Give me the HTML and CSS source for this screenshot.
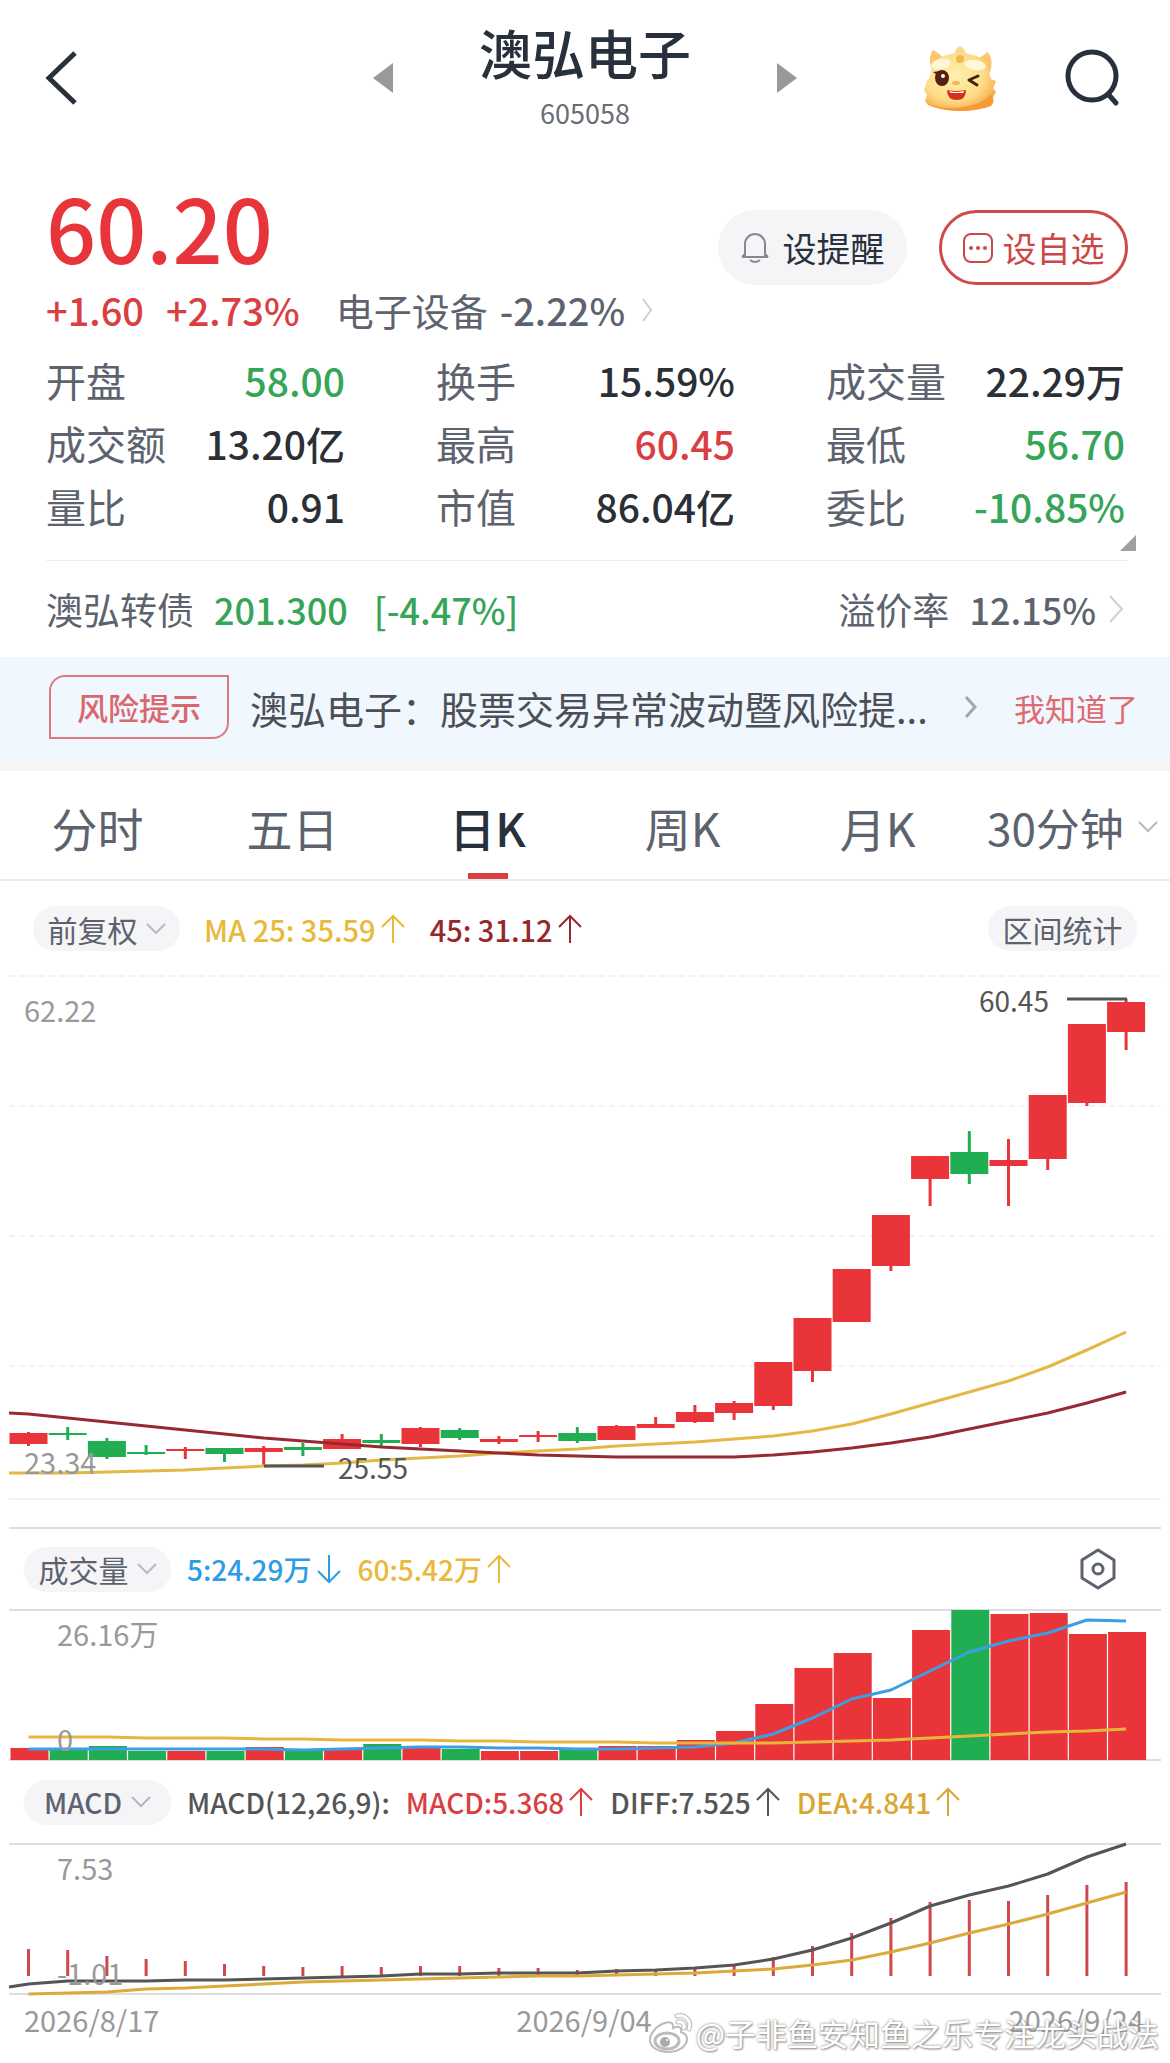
FILE: index.html
```html
<!DOCTYPE html>
<html lang="zh-CN">
<head>
    <meta charset="UTF-8">
    <meta name="viewport" content="width=device-width, initial-scale=1.0">
    <title>澳弘电子 605058</title>
    <link rel="stylesheet" href="styles.css">
</head>
<body>
    <header class="header">
        <button class="icon-btn back" aria-label="返回">
            <svg width="36" height="60" viewBox="0 0 36 60"><path d="M31 5L5 30l26 25" fill="none" stroke="#27303b" stroke-width="5"/></svg>
        </button>
        <div class="stock">
            <button class="icon-btn" aria-label="上一只">
                <svg width="20" height="30" viewBox="0 0 20 30"><path d="M20 0v30L0 15z" fill="#999"/></svg>
            </button>
            <div class="stock-name">
                <h1>澳弘电子</h1>
                <p>605058</p>
            </div>
            <button class="icon-btn" aria-label="下一只">
                <svg width="20" height="30" viewBox="0 0 20 30"><path d="M0 0v30l20-15z" fill="#999"/></svg>
            </button>
        </div>
        <div class="header-tools">
            <button class="icon-btn" aria-label="助手">
                <svg width="74" height="68" viewBox="0 0 74 68">
                    <defs>
                        <radialGradient id="face" cx="0.42" cy="0.4" r="0.65">
                            <stop offset="0" stop-color="#fff0b0"/>
                            <stop offset="0.65" stop-color="#fedc88"/>
                            <stop offset="1" stop-color="#f7a544"/>
                        </radialGradient>
                    </defs>
                    <path d="M8 24Q5 12 10 6Q18 10 21 16zM54 15Q60 12 65 8Q71 16 67 29z" fill="#fcc66f"/>
                    <path d="M31 12Q32 4 37 2Q43 5 43 12z" fill="#fbd88a"/>
                    <path d="M10 19Q20 9 37 9Q54 9 64 19Q66 28 68 35L73 37L70 44L73 48L70 53Q72 58 68 62Q55 67 36 67Q16 66 5 61L2 57L4 51L1 46L4 37Q7 34 8 27z" fill="url(#face)"/>
                    <path d="M4 60Q22 66 40 63Q58 61 69 50Q71 57 67 62Q54 67 35 67Q15 66 4 60z" fill="#f79a35"/>
                    <ellipse cx="37" cy="15" rx="4" ry="4" fill="#f3b94e"/>
                    <ellipse cx="18" cy="20" rx="10" ry="5" transform="rotate(-12 18 20)" fill="#fff8d8"/>
                    <ellipse cx="52" cy="21" rx="11" ry="5" transform="rotate(8 52 21)" fill="#fff8d8"/>
                    <ellipse cx="19" cy="34" rx="7" ry="8" fill="#57210f"/>
                    <path d="M10 28l7-1-3 4z" fill="#57210f"/>
                    <circle cx="20" cy="32" r="2" fill="#fff"/>
                    <path d="M55 32l-9 4 8 5" fill="none" stroke="#3e260c" stroke-width="3" stroke-linecap="round" stroke-linejoin="round"/>
                    <ellipse cx="33" cy="39" rx="4" ry="2" fill="#f5b45b"/>
                    <path d="M24 46Q33 48 43 46Q43 56 34 56Q24 56 24 46z" fill="#d52f20"/>
                    <path d="M26 47Q33 49 41 47L40 49H28z" fill="#fff"/>
                </svg>
            </button>
            <button class="icon-btn" aria-label="搜索">
                <svg width="56" height="60" viewBox="0 0 56 60" fill="none" stroke="#27303b" stroke-width="5" stroke-linecap="round"><circle cx="28" cy="28" r="24"/><path d="M44 46l8 9"/></svg>
            </button>
        </div>
    </header>

    <section class="quote">
        <div>
            <p class="price">60.20</p>
            <p class="change">
                <span class="up">+1.60</span>
                <span class="up">+2.73%</span>
                <a href="#" class="sector">电子设备 <b>-2.22%</b>
                    <svg width="12" height="26" viewBox="0 0 12 26"><path d="M2 2l8 11-8 11" fill="none" stroke="#ccd1d8" stroke-width="2"/></svg>
                </a>
            </p>
        </div>
        <div class="quote-btns">
            <button class="round-btn">
                <svg width="28" height="32" viewBox="0 0 28 32" fill="none" stroke="#85898f" stroke-width="2"><path d="M4 25V12a10 10 0 0 1 20 0v13M1 25h26M1 25l3-3M27 25l-3-3"/><path d="M9 28q5 4 10 0"/></svg>
                设提醒
            </button>
            <button class="round-btn round-btn-red">
                <svg width="30" height="30" viewBox="0 0 30 30"><rect x="1" y="1" width="28" height="28" rx="7" fill="none" stroke="#cc4747" stroke-width="2"/><g fill="#cc4747"><circle cx="8" cy="15" r="2"/><circle cx="15" cy="15" r="2"/><circle cx="22" cy="15" r="2"/></g></svg>
                设自选
            </button>
        </div>
    </section>

    <dl class="stats">
        <div><dt>开盘</dt><dd class="down">58.00</dd></div>
        <div><dt>换手</dt><dd>15.59%</dd></div>
        <div><dt>成交量</dt><dd>22.29万</dd></div>
        <div><dt>成交额</dt><dd>13.20亿</dd></div>
        <div><dt>最高</dt><dd class="up">60.45</dd></div>
        <div><dt>最低</dt><dd class="down">56.70</dd></div>
        <div><dt>量比</dt><dd>0.91</dd></div>
        <div><dt>市值</dt><dd>86.04亿</dd></div>
        <div><dt>委比</dt><dd class="down">-10.85%</dd></div>
    </dl>
    <div class="stats-more">
        <svg width="16" height="16" viewBox="0 0 16 16"><path d="M16 0v16H0z" fill="#9c9fa3"/></svg>
    </div>

    <a href="#" class="bond">
        <span>澳弘转债</span>
        <span class="down">201.300</span>
        <span class="down bond-pct">[-4.47%]</span>
        <span class="bond-rate">溢价率</span>
        <b>12.15%</b>
        <svg width="16" height="30" viewBox="0 0 16 30"><path d="M2 2l12 13L2 28" fill="none" stroke="#ccd1d8" stroke-width="2"/></svg>
    </a>

    <section class="notice">
        <span class="tag">风险提示</span>
        <a href="#" class="notice-text">澳弘电子：股票交易异常波动暨风险提...</a>
        <svg width="14" height="24" viewBox="0 0 14 24"><path d="M2 2l9 10-9 10" fill="none" stroke="#a3a8b0" stroke-width="3"/></svg>
        <button class="notice-ok">我知道了</button>
    </section>

    <nav class="tabs">
        <button class="tab">分时</button>
        <button class="tab">五日</button>
        <button class="tab active">日K</button>
        <button class="tab">周K</button>
        <button class="tab">月K</button>
        <label class="tab tab-select">
            <select aria-label="分钟周期"><option>30分钟</option></select>
            <svg width="20" height="12" viewBox="0 0 20 12"><path d="M1 1l9 9 9-9" fill="none" stroke="#b4bac3" stroke-width="2"/></svg>
        </label>
    </nav>

    <main class="charts">
        <div class="legend legend-main">
            <label class="pill">
                <select aria-label="复权"><option>前复权</option></select>
                <svg width="20" height="12" viewBox="0 0 20 12"><path d="M1 1l9 9 9-9" fill="none" stroke="#b4bac3" stroke-width="2"/></svg>
            </label>
            <span class="yellow">MA 25: 35.59<svg class="arrow" viewBox="0 0 26 30"><path d="M13 29V2M2 13L13 2l11 11"/></svg></span>
            <span class="wine">45: 31.12<svg class="arrow" viewBox="0 0 26 30"><path d="M13 29V2M2 13L13 2l11 11"/></svg></span>
            <button class="pill pill-right">区间统计</button>
        </div>
        <svg class="chart" id="price" viewBox="9 0 1152 568">
            <g class="grid">
                <path d="M9 17h1152M9 147h1152M9 277h1152M9 407h1152" stroke-dasharray="6 4"/>
                <path d="M9 540h1152"/>
            </g>
            <g class="plot"></g>
            <path d="M1067 40h60M264 507h60" stroke="#555" stroke-width="3"/>
            <text x="24" y="63">62.22</text>
            <text x="24" y="515">23.34</text>
            <text class="mark" x="979" y="53">60.45</text>
            <text class="mark" x="338" y="520">25.55</text>
        </svg>

        <div class="legend">
            <label class="pill">
                <select aria-label="副图一"><option>成交量</option></select>
                <svg width="20" height="12" viewBox="0 0 20 12"><path d="M1 1l9 9 9-9" fill="none" stroke="#b4bac3" stroke-width="2"/></svg>
            </label>
            <span class="blue">5:24.29万<svg class="arrow" viewBox="0 0 26 30"><path d="M13 1v27M2 17l11 11 11-11"/></svg></span>
            <span class="yellow">60:5.42万<svg class="arrow" viewBox="0 0 26 30"><path d="M13 29V2M2 13L13 2l11 11"/></svg></span>
            <button class="icon-btn settings" aria-label="设置">
                <svg width="36" height="44" viewBox="0 0 36 44" fill="none" stroke="#5d636e" stroke-width="3" stroke-linejoin="round"><path d="M18 3l16 10v18L18 41 2 31V13z"/><circle cx="18" cy="22" r="5"/></svg>
            </button>
        </div>
        <svg class="chart" id="volume" viewBox="9 0 1152 150">
            <path class="axis" d="M9 149h1152"/>
            <g class="plot"></g>
            <text x="57" y="35">26.16万</text>
            <text x="57" y="140">0</text>
        </svg>

        <div class="legend legend-macd">
            <label class="pill">
                <select aria-label="副图二"><option>MACD</option></select>
                <svg width="20" height="12" viewBox="0 0 20 12"><path d="M1 1l9 9 9-9" fill="none" stroke="#b4bac3" stroke-width="2"/></svg>
            </label>
            <span>MACD(12,26,9):</span>
            <span class="up">MACD:5.368<svg class="arrow" viewBox="0 0 26 30"><path d="M13 29V2M2 13L13 2l11 11"/></svg></span>
            <span>DIFF:7.525<svg class="arrow" viewBox="0 0 26 30"><path d="M13 29V2M2 13L13 2l11 11"/></svg></span>
            <span class="gold">DEA:4.841<svg class="arrow" viewBox="0 0 26 30"><path d="M13 29V2M2 13L13 2l11 11"/></svg></span>
        </div>
        <svg class="chart" id="macd" viewBox="9 0 1152 150">
            <path class="axis" d="M9 149h1152"/>
            <g class="plot"></g>
            <text x="57" y="35">7.53</text>
            <text x="57" y="140">-1.01</text>
        </svg>
        <div class="dates">
            <span>2026/8/17</span>
            <span>2026/9/04</span>
            <span>2026/9/24</span>
            <div class="watermark">
                <svg width="46" height="42" viewBox="0 0 46 42">
                    <path d="M17 11C9 13 1 22 2 29c1 7 9 11 18 11 11 0 19-6 19-13 0-4-3-6-6-7 1-4-1-7-8-4 1-5-3-7-8-5z" fill="#fff" stroke="#bbb" stroke-width="2"/>
                    <ellipse cx="19" cy="29" rx="12" ry="8" fill="#fff" stroke="#bbb" stroke-width="3"/>
                    <circle cx="17" cy="30" r="5" fill="#aaa"/>
                    <circle cx="19" cy="28" r="1" fill="#fff"/>
                    <path d="M29 4c8-2 15 5 12 13M30 10c4-1 7 2 6 6" fill="none" stroke="#bbb" stroke-width="5" stroke-linecap="round"/>
                    <path d="M29 4c8-2 15 5 12 13M30 10c4-1 7 2 6 6" fill="none" stroke="#fff" stroke-width="3" stroke-linecap="round"/>
                </svg>
                @子非鱼安知鱼之乐专注龙头战法
            </div>
        </div>
    </main>

    <script src="chart.js"></script>
</body>
</html>
```

FILE: styles.css
```css
* { box-sizing: border-box; margin: 0; padding: 0; }
body { background-color: #fff; color: #2b2f36; font-family: "Noto Sans CJK SC", sans-serif; }
button, select { border: none; background: none; font: inherit; color: inherit; cursor: pointer; }
select { appearance: none; }
a { color: inherit; text-decoration: none; }
b { font-weight: 500; }
svg { display: block; flex: none; }
.up { color: #d93f42; }
.down { color: #36a558; }
.yellow { color: #e8b93a; }
.gold { color: #dba532; }
.wine { color: #96282c; }
.blue { color: #2f9be6; }

/* header */
.header { display: grid; grid-template-columns: 1fr 424px 1fr; align-items: center; padding: 25px 50px 0 44px; }
.back { justify-self: start; }
.stock { display: flex; justify-content: space-between; align-items: center; margin: 0 -3px 0 3px; }
.stock-name { text-align: center; }
.stock-name h1 { font-size: 53px; line-height: 54px; font-weight: 500; color: #27303b; margin-bottom: 16px; }
.stock-name p { font-size: 27px; line-height: 36px; color: #696d75; }
.header-tools { display: flex; justify-content: flex-end; align-items: center; gap: 67px; }

/* price */
.quote { display: flex; justify-content: space-between; align-items: flex-start; padding: 51px 42px 0 46px; }
.price { font-size: 88px; line-height: 88px; font-weight: 500; color: #e8353b; }
.change { display: flex; align-items: center; gap: 22px; margin-top: 16px; font-size: 38px; line-height: 48px; font-weight: 500; }
.sector { display: flex; align-items: center; gap: 12px; margin-left: 14px; font-weight: 400; color: #5d636e; }
.sector svg { margin-left: 4px; }
.quote-btns { display: flex; gap: 32px; padding-top: 28px; }
.round-btn { display: flex; align-items: center; justify-content: center; gap: 14px; width: 189px; height: 75px; border-radius: 38px; background-color: #f5f5f8; font-size: 34px; line-height: 40px; color: #27303b; }
.round-btn-red { gap: 10px; border: 3px solid #cf4a4a; background-color: #fff; color: #cc4747; }

.stats { display: grid; grid-template-columns: repeat(3, 1fr); column-gap: 91px; padding: 15px 45px 0 46px; }
.stats div { display: flex; justify-content: space-between; line-height: 63px; }
.stats dt { font-size: 40px; color: #5d636e; }
.stats dd { font-size: 39px; font-weight: 500; }
.stats-more { display: flex; justify-content: flex-end; margin: -3px 42px 0 46px; padding: 0 0 9px 0; border-bottom: 1px solid #eceef0; }
.stats-more svg { margin-right: -8px; }

.bond { display: flex; align-items: center; gap: 20px; height: 96px; padding: 0 46px; font-size: 37px; color: #5d636e; }
.bond b, .bond .down { font-size: 36px; font-weight: 500; }
.bond .bond-pct { margin-left: 6px; }
.bond-rate { margin-left: auto; }
.bond svg { margin-left: -8px; }

.notice { display: flex; align-items: center; height: 114px; padding: 0 32px 0 49px; background-color: #f0f7ff; border-bottom: 14px solid #f5f5f5; }
.tag { padding: 7px 26px; border: 2px solid #d87c80; border-radius: 16px 0 16px 0; font-size: 31px; line-height: 46px; font-weight: 500; color: #d9686c; }
.notice-text { flex: 1; margin: 0 30px 0 21px; font-size: 38px; color: #4c4f55; white-space: nowrap; }
.notice-ok { margin-left: 36px; font-size: 31px; color: #e06b6f; }

/* tabs */
.tabs { display: grid; grid-template-columns: repeat(6, 1fr); height: 110px; border-bottom: 2px solid #ececee; }
.tab { position: relative; display: flex; align-items: center; justify-content: center; padding-top: 4px; font-size: 46px; color: #5d636e; }
.tab.active { font-weight: 500; color: #27303b; }
.tab.active::after { content: ""; position: absolute; bottom: 0; left: 50%; width: 40px; height: 6px; margin-left: -20px; background-color: #d94245; }
.tab-select { gap: 14px; font-size: 44px; }

/* charts */
.charts { padding: 0 9px; }
.legend { display: flex; align-items: center; gap: 16px; height: 84px; padding: 0 15px; border-top: 2px solid #dedede; border-bottom: 2px solid #dedede; font-size: 28px; font-weight: 500; color: #555; }
.legend-main { height: 78px; padding: 17px 24px 0 24px; gap: 24px; border: none; font-size: 29px; }
.legend-macd { border-top: none; }
.legend span { display: flex; align-items: center; }
.pill { display: flex; align-items: center; justify-content: center; gap: 8px; width: 147px; height: 45px; border-radius: 23px; background-color: #f5f5f8; font-size: 30px; font-weight: 400; color: #5d636e; }
.legend-macd .pill { font-size: 28px; font-weight: 500; }
.pill-right { width: 149px; margin-left: auto; }
.arrow { width: 26px; height: 30px; margin-left: 4px; fill: none; stroke: currentColor; stroke-width: 2; }
.settings { margin-left: auto; margin-right: 30px; }
.chart { width: 100%; height: auto; overflow: visible; }
.chart text { font-size: 29px; fill: #999; }
.chart .mark { font-size: 28px; fill: #555; }
.grid path { stroke: #f3f3f3; stroke-width: 2; }
.axis { stroke: #dedede; stroke-width: 2; }
.dates { position: relative; display: flex; justify-content: space-between; padding: 4px 17px 22px 15px; font-size: 29px; line-height: 40px; color: #999; }
.watermark { position: absolute; right: 2px; top: 17px; display: flex; align-items: center; gap: 2px; font-size: 31px; color: #fff; text-shadow: 0 0 3px #888, 1px 1px 2px #999; white-space: nowrap; }
```

FILE: chart.js
```js
const RED = "#e9343a", GREEN = "#21ae53";
const STEP = 39.2, FIRST = 28.5;

// [body top, body bottom, high, low, up]
const candles = [
    [474, 485, 473, 487, 1], [474, 476, 468, 481, 0], [482, 498, 479, 500, 0], [493, 495, 486, 496, 0],
    [490, 492, 488, 500, 1], [489, 495, 489, 503, 0], [489, 493, 487, 507, 1], [488, 491, 484, 497, 0],
    [480, 490, 475, 490, 1], [481, 484, 475, 488, 0], [469, 485, 468, 488, 1], [471, 479, 469, 481, 0],
    [480, 483, 477, 485, 1], [476, 478, 472, 483, 1], [474, 482, 468, 484, 0], [467, 481, 466, 481, 1],
    [465, 469, 458, 469, 1], [453, 463, 446, 464, 1], [444, 454, 442, 461, 1], [403, 447, 403, 451, 1],
    [359, 412, 359, 423, 1], [310, 363, 310, 363, 1], [256, 307, 256, 312, 1], [197, 220, 197, 247, 1],
    [193, 215, 172, 225, 0], [201, 207, 180, 247, 1], [136, 200, 136, 211, 1], [65, 144, 65, 147, 1],
    [43, 73, 40, 91, 1]
];
const ma25 = [514, 514, 513, 512, 511, 509, 507, 506, 504, 501, 499, 497, 494, 492, 490, 487, 485, 483, 480, 477, 472, 465, 455, 444, 433, 422, 408, 391, 373];
const ma45 = [455, 459, 463, 467, 471, 475, 479, 482, 485, 488, 490, 492, 494, 496, 497, 498, 498, 498, 498, 496, 493, 489, 484, 478, 470, 462, 454, 444, 433];

const volumes = [137, 138, 135, 140, 140, 140, 136, 140, 137, 133, 137, 138, 140, 140, 139, 135, 135, 129, 120, 93, 57, 42, 87, 19, -1, 3, 2, 23, 21];
const vol5 = [138, 138, 138, 138, 138, 138, 138, 139, 138, 137, 136, 136, 137, 137, 138, 138, 137, 136, 132, 123, 107, 88, 79, 60, 41, 30, 22, 9, 10];
const vol60 = [126, 126, 126, 127, 127, 127, 128, 128, 129, 129, 129, 130, 130, 131, 131, 131, 132, 132, 132, 132, 131, 130, 129, 127, 125, 123, 121, 120, 118];

const bars = [104, 105, 111, 114, 116, 119, 121, 122, 121, 122, 121, 121, 123, 123, 125, 124, 124, 122, 120, 112, 101, 88, 73, 57, 55, 56, 50, 40, 37];
const diff = [139, 136, 136, 136, 135, 135, 134, 133, 132, 131, 129, 129, 128, 128, 128, 126, 125, 123, 120, 114, 105, 93, 78, 61, 50, 41, 29, 12, -1];
const dea = [149, 148, 147, 144, 143, 141, 139, 137, 136, 135, 134, 133, 132, 131, 131, 130, 129, 128, 126, 124, 120, 115, 107, 98, 88, 79, 69, 58, 47];

function x(i) {
    return FIRST + i * STEP;
}

function rect(left, top, width, height, color) {
    return `<rect x="${left}" y="${top}" width="${width}" height="${height}" fill="${color}"/>`;
}

function line(values, color, start = "") {
    const points = values.map((v, i) => `${x(i)},${v}`).join(" ");
    return `<polyline points="${start} ${points}" fill="none" stroke="${color}" stroke-width="3" stroke-linejoin="round"/>`;
}

function draw(id, html) {
    document.querySelector("#" + id + " .plot").innerHTML = html;
}

draw("price", candles.map(([top, bottom, high, low, up], i) => {
    const color = up ? RED : GREEN;
    return rect(x(i) - 19, top, 38, bottom - top, color) + rect(x(i) - 1.5, high, 3, low - high, color);
}).join("") + line(ma25, "#e5b846", "9,514") + line(ma45, "#962a30", "9,454"));

draw("volume", volumes.map((top, i) =>
    rect(x(i) - 18, top, 38, 149 - top, candles[i][4] ? RED : GREEN)
).join("") + line(vol5, "#3c9fe2") + line(vol60, "#e8b53c"));

draw("macd", bars.map((top, i) =>
    rect(x(i) - 1.5, top, 3, 131 - top, "#cf484b")
).join("") + line(diff, "#555", "9,142") + line(dea, "#dba93c"));
```
